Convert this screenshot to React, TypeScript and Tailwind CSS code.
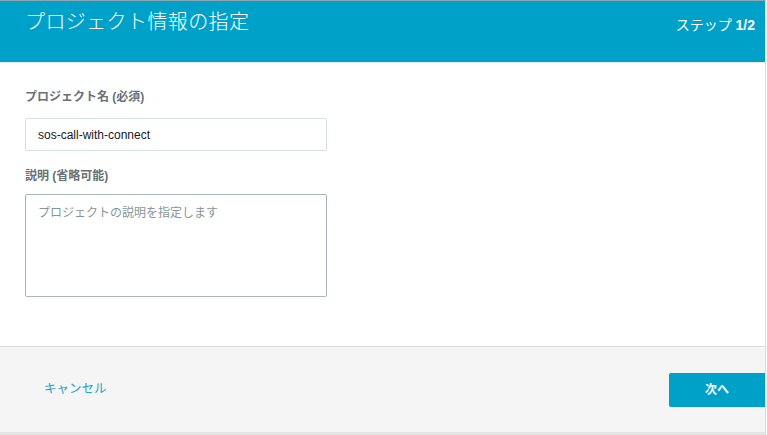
export default function App() {
  const font = { fontFamily: "'Liberation Sans', 'Noto Sans CJK JP', sans-serif" };
  return (
    <div className="w-[767px] h-[435px] bg-white" style={font}>
      <div className="w-[766px] flex flex-col border-r border-[#dcdcdc] border-t border-t-[#8aa6b2]">
        <header className="h-[61px] bg-[#00a1c9] flex justify-between items-start pl-[25px] pr-[10px] text-white">
          <h1 className="text-[20px] leading-[30px] pt-[6px] font-light tracking-[0.4px]">プロジェクト情報の指定</h1>
          <div className="text-[14px] leading-[20px] pt-[14px]">
            ステップ <span className="font-bold">1/2</span>
          </div>
        </header>

        <div className="h-[1px] bg-[#e6ecee]" />

        <main className="pl-[25px] pt-[26px] pb-[49px] flex flex-col">
          <label className="text-[12px] leading-[16px] font-bold text-[#687078]">プロジェクト名 (必須)</label>
          <div className="mt-[13px] w-[302px] h-[33px] border border-[#dadfe0] rounded-[2px] flex items-center px-[12px] text-[12px] text-[#16191f]">
            sos-call-with-connect
          </div>
          <label className="mt-[17px] text-[12px] leading-[16px] font-bold text-[#687078]">説明 (省略可能)</label>
          <div className="mt-[10px] w-[302px] h-[103px] border border-[#aab7b8] rounded-[2px] px-[12px] pt-[10px] text-[12px] leading-[16px] text-[#879596]">
            プロジェクトの説明を指定します
          </div>
        </main>

        <footer className="border-t border-[#dcdcdc] bg-[#f5f5f5] h-[89px] flex items-center justify-between pl-[44px] border-b-[3px] border-b-[#e4e4e4]">
          <span className="text-[12.5px] text-[#1ea2c9]">キャンセル</span>
          <button className="w-[96px] h-[34px] bg-[#00a1c9] text-white text-[12px] font-bold rounded-l-[2px]">次へ</button>
        </footer>
      </div>
    </div>
  );
}
